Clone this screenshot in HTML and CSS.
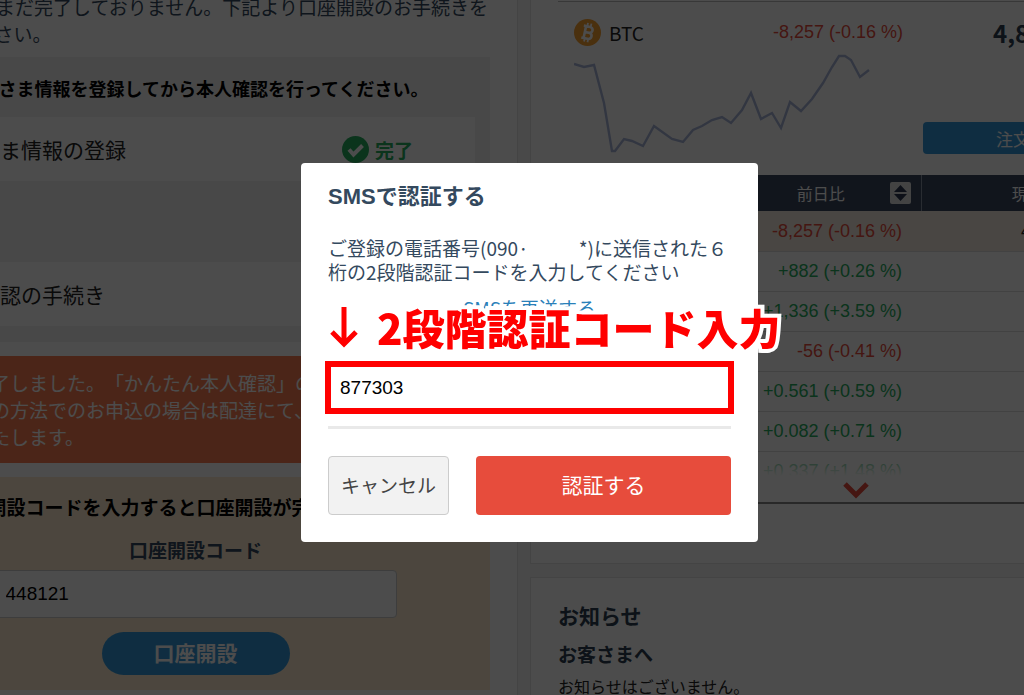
FILE: index.html
```
<!DOCTYPE html>
<html lang="ja">

<head>
    <meta charset="UTF-8" />
    <meta name="viewport" content="width=device-width, initial-scale=1.0" />
    <title>SMS認証</title>
    <link rel="stylesheet" href="styles.css">
</head>

<body>
    <div class="page">
        <main class="card account">
            <p class="lead">口座開設はまだ完了しておりません。下記より口座開設のお手続きを<br>行ってください。</p>

            <section class="steps">
                <h2>お客さま情報を登録してから本人確認を行ってください。</h2>
                <div class="step">
                    <span>お客さま情報の登録</span>
                    <span class="done">
                        <svg width="27" height="27" viewBox="0 0 27 27">
                            <circle cx="13.5" cy="13.5" r="13.5" fill="#27ae60" />
                            <path d="M7 13.5l4.5 5 9-9" fill="none" stroke="#fff" stroke-width="4" />
                        </svg>
                        完了
                    </span>
                </div>
                <div class="step">
                    <span>本人確認の手続き</span>
                </div>
            </section>

            <p class="notice">申込が完了しました。「かんたん本人確認」の場合は、<br>それ以外の方法でのお申込の場合は配達にて、コードを<br>郵送でいたします。</p>

            <form class="open-form">
                <h2>口座開設コードを入力すると口座開設が完了いたします。</h2>
                <label for="openCode">口座開設コード</label>
                <input type="text" id="openCode" value="448121">
                <button type="button">口座開設</button>
            </form>
        </main>

        <div class="side">
            <section class="card market">
                <div class="ticker">
                    <div class="coin">
                        <svg width="27" height="27" viewBox="0 0 27 27">
                            <circle cx="13.5" cy="13.5" r="13.5" fill="#f7a030" />
                            <g transform="rotate(12 13.5 13.5)" fill="none" stroke="#fff" stroke-width="2.6">
                                <path d="M8.500 7.500h6.500a3 3 0 0 1 0 6h-4M10.800 13.500h5a3.200 3.200 0 0 1 0 6.200H8.500M10.800 7.500v12" />
                                <path d="M12 4v3M15.500 4v3M12 20v3M15.500 20v3" stroke-width="1.8" />
                            </g>
                        </svg>
                        <span>BTC</span>
                        <span class="change down">-8,257 (-0.16 %)</span>
                        <strong class="price">4,896,020</strong>
                    </div>
                    <div class="chart-row">
                        <svg class="chart" width="298" height="104" viewBox="0 0 298 104">
                            <polyline fill="none" stroke="#a9b6d9" stroke-width="2.4" points="0,14 10,17 20,15 30,53 38,101 41,101 50,89 58,91 69,96 80,76 98,89 109,92 119,80 128,76 138,70 148,67 157,73 168,60 177,43 187,69 198,63 207,78 216,52 227,61 238,49 249,33 258,17 265,6 271,6 277,10 286,27 295,20" />
                        </svg>
                        <button type="button">注文する</button>
                    </div>
                </div>

                <div class="rates">
                    <table>
                        <thead>
                            <tr>
                                <th class="col-name">銘柄</th>
                                <th class="col-change">
                                    <div class="sortable">
                                        <span>前日比</span>
                                        <svg width="21" height="22" viewBox="0 0 21 22">
                                            <rect width="21" height="22" rx="2" fill="#dfe0e2" />
                                            <path d="M4 10l6.500-7 6.500 7zM4 12l6.500 7 6.500-7z" fill="#2c3850" />
                                        </svg>
                                    </div>
                                </th>
                                <th class="col-price">
                                    <div class="sortable">
                                        <span>現在値</span>
                                        <svg width="21" height="22" viewBox="0 0 21 22">
                                            <rect width="21" height="22" rx="2" fill="#dfe0e2" />
                                            <path d="M4 10l6.500-7 6.500 7zM4 12l6.500 7 6.500-7z" fill="#2c3850" />
                                        </svg>
                                    </div>
                                </th>
                            </tr>
                        </thead>
                        <tbody>
                            <tr class="selected">
                                <td>BTC</td>
                                <td class="down">-8,257 (-0.16 %)</td>
                                <td>4,896,020</td>
                            </tr>
                            <tr>
                                <td>ETH</td>
                                <td class="up">+882 (+0.26 %)</td>
                                <td></td>
                            </tr>
                            <tr>
                                <td>BCH</td>
                                <td class="up">+1,336 (+3.59 %)</td>
                                <td></td>
                            </tr>
                            <tr>
                                <td>LTC</td>
                                <td class="down">-56 (-0.41 %)</td>
                                <td></td>
                            </tr>
                            <tr>
                                <td>XRP</td>
                                <td class="up">+0.561 (+0.59 %)</td>
                                <td></td>
                            </tr>
                            <tr>
                                <td>XEM</td>
                                <td class="up">+0.082 (+0.71 %)</td>
                                <td></td>
                            </tr>
                            <tr>
                                <td>XLM</td>
                                <td class="up">+0.337 (+1.48 %)</td>
                                <td></td>
                            </tr>
                        </tbody>
                    </table>
                    <div class="more">
                        <svg width="28" height="20" viewBox="0 0 28 20">
                            <path d="M3 4l11 11L25 4" fill="none" stroke="#e74c3c" stroke-width="5" />
                        </svg>
                    </div>
                </div>
            </section>

            <section class="card news">
                <h2>お知らせ</h2>
                <h3>お客さまへ</h3>
                <p>お知らせはございません。</p>
            </section>
        </div>
    </div>

    <div class="overlay">
        <form class="modal" role="dialog" aria-labelledby="modalTitle">
            <h1 id="modalTitle">SMSで認証する</h1>
            <label class="message" for="smsCode">ご登録の電話番号(090·<span class="masked"></span>*)に送信された６<br>桁の2段階認証コードを入力してください</label>
            <a href="#" class="resend">SMSを再送する</a>
            <div class="callout">
                <svg width="28" height="42" viewBox="0 0 28 42">
                    <path d="M14 1v36M2 26l12 12 12-12" fill="none" stroke="#f00" stroke-width="5" />
                </svg>
                <span>2段階認証コード入力</span>
            </div>
            <input type="text" id="smsCode" value="877303">
            <hr>
            <div class="buttons">
                <button type="button" class="cancel">キャンセル</button>
                <button type="submit" class="submit">認証する</button>
            </div>
        </form>
    </div>
</body>

</html>
```
FILE: styles.css
```
* {
    box-sizing: border-box;
    margin: 0;
    padding: 0;
}

body {
    height: 100vh;
    overflow: hidden;
    background: #f5f5f5;
    color: #222;
    font-family: "Noto Sans CJK JP", sans-serif;
    font-size: 19px;
    line-height: 27px;
    text-spacing-trim: space-all;
}

input,
button {
    font-family: inherit;
    font-size: 19px;
}

svg {
    display: block;
    flex: none;
}

h2 {
    font-size: 19px;
    line-height: 30px;
}

.page {
    display: grid;
    grid-template-columns: 645px 1fr;
    gap: 12px;
    margin: -7px -185px 0 -127px;
}

.card {
    background: #fff;
    border: 1px solid #e4e4e4;
    border-top: none;
    padding: 0 27px;
}

/* left column */
.account {
    padding-bottom: 30px;
}

.lead {
    color: #34495e;
    white-space: nowrap;
    margin-bottom: 10px;
}

.steps {
    background: #f2f2f2;
    padding: 16px 15px;
    margin-bottom: 14px;
}

.steps h2,
.open-form h2 {
    color: #000;
    text-align: center;
    white-space: nowrap;
}

.steps h2 {
    margin-bottom: 14px;
    font-size: 18px;
}

.step {
    display: flex;
    align-items: center;
    justify-content: space-between;
    height: 64px;
    padding: 0 62px 0 21px;
    background: #fff;
    font-size: 21px;
}

.step + .step {
    margin-top: 81px;
}

.done {
    display: flex;
    align-items: center;
    gap: 6px;
    color: #27ae60;
    font-size: 19px;
    font-weight: bold;
}

.notice {
    background: #fa7e52;
    color: #fff;
    padding: 13px 14px;
    margin-bottom: 14px;
    white-space: nowrap;
}

.open-form {
    display: flex;
    flex-direction: column;
    align-items: center;
    background: #fdebd0;
    padding: 15px;
}

.open-form label {
    margin: 14px 0 7px;
    color: #34495e;
    font-weight: bold;
}

.open-form input {
    width: 402px;
    height: 48px;
    padding: 0 10px;
    border: 1px solid #ccc;
    border-radius: 4px;
    font-family: "Liberation Sans", sans-serif;
}

.open-form button {
    width: 188px;
    height: 43px;
    margin-top: 14px;
    padding-bottom: 3px;
    border: none;
    border-radius: 22px;
    background: #3498db;
    color: #fff;
    font-size: 21px;
    font-weight: bold;
}

/* right column */
.side {
    display: flex;
    flex-direction: column;
    gap: 13px;
}

.market {
    padding-top: 8px;
    padding-bottom: 59px;
}

.ticker {
    border-top: 1px solid #bbb;
    padding: 17px 16px 21px;
}

.coin {
    display: flex;
    align-items: center;
    gap: 8px;
}

.change {
    width: 251px;
    text-align: right;
    font-family: "Liberation Sans", sans-serif;
    font-size: 18px;
}

.price {
    margin-left: 82px;
    color: #2c3e50;
    font-size: 24px;
}

.chart-row {
    display: flex;
    align-items: flex-end;
    gap: 51px;
    padding-top: 4px;
}

.chart-row button {
    width: 214px;
    height: 32px;
    border: none;
    border-radius: 4px;
    background: #3498db;
    color: #fff;
    font-size: 17px;
}

.rates {
    position: relative;
    border-bottom: 2px solid #888;
}

table {
    width: 100%;
    table-layout: fixed;
    border-collapse: collapse;
    font-size: 18px;
    line-height: 24px;
}

th {
    height: 36px;
    background: #3a4860;
    color: #fff;
    font-size: 16px;
    font-weight: normal;
}

.col-name {
    width: 194px;
}

.col-change {
    width: 169px;
    border-right: 1px solid #8a93a3;
}

.sortable {
    display: flex;
    align-items: center;
    padding-right: 10px;
}

.sortable span {
    flex: 1;
}

td {
    height: 40px;
    padding-right: 19px;
    border-bottom: 1px solid #ddd;
    font-family: "Liberation Sans", sans-serif;
    text-align: right;
    white-space: nowrap;
}

td:last-child {
    padding-right: 80px;
}

.selected {
    background: #f5e9df;
}

.up {
    color: #27ae60;
}

.down {
    color: #e74c3c;
}

/* fades out the last row */
.more {
    position: absolute;
    left: 0;
    right: 0;
    bottom: 0;
    height: 44px;
    padding: 22px 28px 0 0;
    background: linear-gradient(rgba(255, 255, 255, 0.3), #fff 18px);
}

.more svg {
    margin: 0 auto;
}

.rates tbody::after {
    content: "";
    display: block;
    height: 10px;
}

.news {
    border-top: 1px solid #e4e4e4;
    padding-top: 22px;
    padding-bottom: 40px;
    color: #2c3e50;
}

.news h2 {
    font-size: 21px;
}

.news h3 {
    margin: 10px 0 6px;
    font-size: 19px;
}

.news p {
    color: #222;
    font-size: 16px;
}

/* modal */
.overlay {
    position: fixed;
    top: 0;
    left: 0;
    right: 0;
    bottom: 0;
    display: flex;
    align-items: center;
    justify-content: center;
    padding: 10px 0 0 35px;
    background: rgba(0, 0, 0, 0.7);
}

.modal {
    position: relative;
    width: 457px;
    padding: 20px 27px 27px;
    border-radius: 4px;
    background: #fff;
    color: #34495e;
}

.modal h1 {
    margin-bottom: 25px;
    font-family: "Liberation Sans", "Noto Sans CJK JP", sans-serif;
    font-size: 22px;
    line-height: 28px;
}

.message,
.resend {
    display: block;
    line-height: 24px;
    white-space: nowrap;
}

.masked {
    display: inline-block;
    width: 50px;
}

.resend {
    margin: 12px 0 44px;
    color: #2980b9;
    text-align: center;
    text-decoration: none;
}

.callout {
    position: absolute;
    top: 136px;
    left: 29px;
    display: flex;
    align-items: center;
    gap: 19px;
    color: #f00;
    font-size: 42px;
    font-weight: 900;
    line-height: 56px;
    white-space: nowrap;
}

.callout span {
    -webkit-text-stroke: 8px #fff;
    paint-order: stroke fill;
}

.modal input {
    display: block;
    width: 100%;
    height: 47px;
    padding: 0 11px;
    border: 1px solid #ccc;
    outline: 6px solid #f00;
    outline-offset: -3px;
    font-family: "Liberation Sans", sans-serif;
}

.modal hr {
    height: 3px;
    margin: 15px 0 27px;
    border: none;
    background: #e9e9e9;
}

.buttons {
    display: flex;
    gap: 27px;
}

.buttons button {
    height: 59px;
    padding-bottom: 3px;
    border: none;
    border-radius: 4px;
}

.buttons .cancel {
    width: 121px;
    border: 1px solid #ccc;
    background: #f2f2f2;
    color: #444;
}

.buttons .submit {
    flex: 1;
    background: #e74c3c;
    color: #fff;
    font-size: 21px;
}
```
